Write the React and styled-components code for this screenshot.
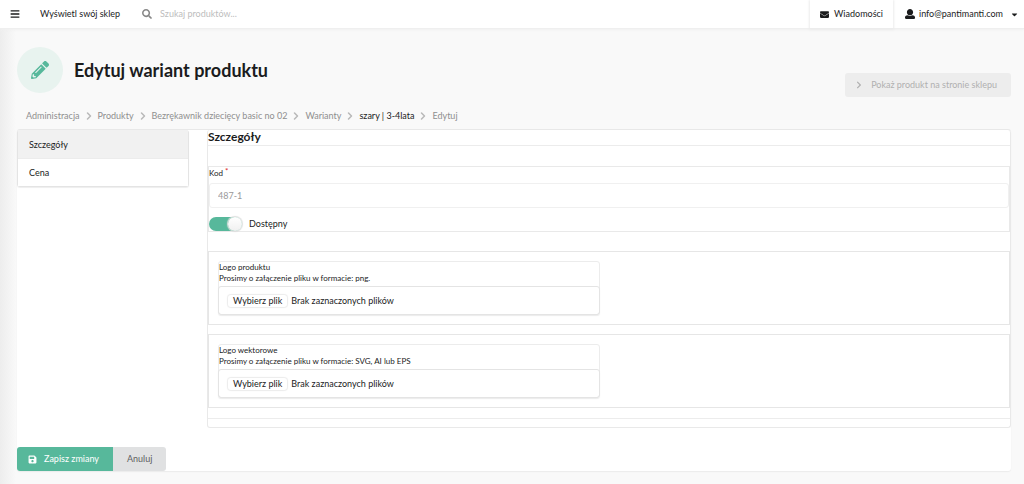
import React from 'react';
import styled, { createGlobalStyle } from 'styled-components';
import { FaBars, FaSearch, FaEnvelope, FaCaretDown, FaChevronRight, FaPencilAlt, FaSave } from 'react-icons/fa';
import { ChevronRight } from 'lucide-react';

const breadcrumbs = [
  { label: 'Administracja' },
  { label: 'Produkty' },
  { label: 'Bezrękawnik dziecięcy basic no 02' },
  { label: 'Warianty' },
  { label: 'szary | 3-4lata', dark: true },
  { label: 'Edytuj' },
];

const uploads = [
  { id: 'logo', label: 'Logo produktu', hint: 'Prosimy o załączenie pliku w formacie: png.' },
  { id: 'vector', label: 'Logo wektorowe', hint: 'Prosimy o załączenie pliku w formacie: SVG, AI lub EPS' },
];

const UserIcon = () => (
  <svg width="10" height="10" viewBox="0 0 512 512" fill="currentColor" aria-hidden="true">
    <path d="M256 0c88.366 0 160 71.634 160 160s-71.634 160-160 160S96 248.366 96 160 167.634 0 256 0zm183.283 333.821l-71.313-17.828c-74.923 53.89-165.738 41.864-223.94 0l-71.313 17.828C29.981 344.505 0 382.903 0 426.955V464c0 26.51 21.49 48 48 48h416c26.51 0 48-21.49 48-48v-37.045c0-44.052-29.981-82.45-72.717-93.134z" />
  </svg>
);

const App = () => {
  return (
    <>
      <GlobalStyle />
      <TopBar>
        <MenuButton type="button" aria-label="Menu"><FaBars size={10} /></MenuButton>
        <ShopLink href="#">Wyświetl swój sklep</ShopLink>
        <Search>
          <FaSearch size={10} />
          <SearchInput type="search" aria-label="Szukaj produktów" placeholder="Szukaj produktów..." />
        </Search>
        <Messages href="#"><FaEnvelope />Wiadomości</Messages>
        <Account type="button"><UserIcon />info@pantimanti.com<Caret /></Account>
      </TopBar>
      <Page>
        <PageHeader>
          <IconCircle><FaPencilAlt /></IconCircle>
          <Title>Edytuj wariant produktu</Title>
          <ShowButton type="button"><FaChevronRight />Pokaż produkt na stronie sklepu</ShowButton>
        </PageHeader>
        <Breadcrumb aria-label="Breadcrumb">
          {breadcrumbs.map((item, index) => (
            <React.Fragment key={item.label}>
              {index > 0 && <ChevronRight size={12} strokeWidth={3} />}
              <Crumb href="#" $dark={item.dark}>{item.label}</Crumb>
            </React.Fragment>
          ))}
        </Breadcrumb>
        <Form onSubmit={(event) => event.preventDefault()}>
          <Columns>
            <Tabs>
              <Tab href="#" $active>Szczegóły</Tab>
              <Tab href="#">Cena</Tab>
            </Tabs>
            <Details>
              <SectionTitle>Szczegóły</SectionTitle>
              <Group>
                <BasicFields>
                  <Label htmlFor="code">Kod<Required>*</Required></Label>
                  <CodeInput id="code" type="text" defaultValue="487-1" />
                  <Toggle>
                    <ToggleInput type="checkbox" role="switch" defaultChecked />
                    Dostępny
                  </Toggle>
                </BasicFields>
                {uploads.map((upload) => (
                  <UploadSection key={upload.id}>
                    <UploadField>
                      <Label htmlFor={upload.id}>{upload.label}</Label>
                      <Hint>{upload.hint}</Hint>
                      <FileBox>
                        <FileButton>Wybierz plik</FileButton>
                        Brak zaznaczonych plików
                        <FileInput id={upload.id} type="file" />
                      </FileBox>
                    </UploadField>
                  </UploadSection>
                ))}
              </Group>
            </Details>
          </Columns>
          <Actions>
            <SaveButton type="submit"><FaSave />Zapisz zmiany</SaveButton>
            <CancelLink href="#">Anuluj</CancelLink>
          </Actions>
        </Form>
      </Page>
    </>
  );
};

export default App;

const GlobalStyle = createGlobalStyle`
  * {
    box-sizing: border-box;
  }

  body {
    margin: 0;
    min-height: 100vh;
    background: linear-gradient(to right, #ededed, #f9f9f9 16px);
    color: #1b1c1d;
    font-family: Lato, 'Liberation Sans', sans-serif;
    font-size: 9px;
    line-height: 12px;
  }

  a {
    color: inherit;
    text-decoration: none;
  }

  button, input {
    font: inherit;
    color: inherit;
  }

  svg {
    flex-shrink: 0;
  }
`;

const TopBar = styled.header`
  display: flex;
  align-items: stretch;
  height: 29px;
  background: #fff;
  border-bottom: 1px solid #efefef;
  box-shadow: 0 1px 2px #f0f0f0;
`;

const BarButton = styled.button`
  display: flex;
  align-items: center;
  border: 0;
  background: none;
`;

const MenuButton = styled(BarButton)`
  padding: 0 10px;
`;

const ShopLink = styled.a`
  display: flex;
  align-items: center;
  padding: 0 10px;
`;

const Search = styled.div`
  display: flex;
  flex: 1;
  align-items: center;
  gap: 8px;
  padding: 0 12px;
  color: #888;
`;

const SearchInput = styled.input`
  flex: 1;
  min-width: 0;
  padding: 0;
  border: 0;
  outline: 0;
  background: none;

  &::placeholder {
    color: #bdbdbd;
  }
`;

const Messages = styled.a`
  display: flex;
  align-items: center;
  gap: 5px;
  padding: 0 10px;
  box-shadow: 0 1px 2px 1px #ececec;
`;

const Account = styled(BarButton)`
  gap: 4px;
  padding: 0 5px 0 12px;
`;

const Caret = styled(FaCaretDown)`
  margin-left: 3px;
`;

const Page = styled.main`
  padding: 18px 13px 13px 17px;
`;

const PageHeader = styled.div`
  display: flex;
  align-items: center;
  gap: 11px;
`;

const IconCircle = styled.div`
  display: flex;
  align-items: center;
  justify-content: center;
  width: 46px;
  height: 46px;
  border-radius: 50%;
  background: #e8f3ef;
  color: #57b89b;
  font-size: 18px;
`;

const Title = styled.h1`
  flex: 1;
  margin: 0;
  font-size: 18px;
  line-height: 24px;
`;

const ShowButton = styled.button`
  display: flex;
  align-items: center;
  align-self: flex-end;
  gap: 8px;
  height: 24px;
  margin-bottom: -4px;
  padding: 0 14px 0 10px;
  border: 0;
  border-radius: 3px;
  background: #ededed;
  color: #b0b0b0;

  svg {
    width: 8px;
    height: 8px;
  }
`;

const Breadcrumb = styled.nav`
  display: flex;
  align-items: center;
  gap: 3px;
  height: 36px;
  padding: 9px 9px 0;
  color: #b8b8b8;
`;

const Crumb = styled.a`
  color: ${({ $dark }) => ($dark ? '#1b1c1d' : '#8f8f8f')};
`;

const Form = styled.form`
  background: #fff;
  border-top: 1px solid #e8e8e8;
  border-radius: 3px;
  box-shadow: 0 1px 1px #ececec;
`;

const Columns = styled.div`
  display: flex;
  align-items: flex-start;
  gap: 18px;
`;

const Tabs = styled.nav`
  width: 172px;
  border: 1px solid #e4e4e4;
  border-radius: 3px;
  border-width: 0 1px 1px;
  box-shadow: 0 1px 1px #eee;
`;

const Tab = styled.a`
  display: block;
  padding: 7px 11px;
  border-top: 1px solid ${({ $active }) => ($active ? 'transparent' : '#ececec')};
  background: ${({ $active }) => ($active ? '#f1f1f1' : '#fff')};
  line-height: 13px;
`;

const Details = styled.div`
  flex: 1;
  min-width: 0;
  padding-bottom: 8px;
  border: 1px solid #e9e9e9;
  border-top: 0;
  border-radius: 3px;
`;

const SectionTitle = styled.h2`
  margin: 0;
  padding-bottom: 2px;
  font-size: 12px;
  line-height: 13px;
`;

const Group = styled.div`
  padding: 20px 0 10px;
  border: 1px solid #ececec;
  border-width: 1px 0;
`;

const BasicFields = styled.div`
  margin-bottom: 19px;
  border: 1px solid #e9e9e9;
`;

const Label = styled.label`
  display: block;
  font-size: 8px;
  line-height: 11px;
`;

const Required = styled.span`
  margin-left: 2px;
  color: #db2828;
  vertical-align: 2px;
  line-height: 1;
`;

const CodeInput = styled.input`
  display: block;
  width: 100%;
  height: 25px;
  margin: 4px 0 9px;
  padding: 0 8px;
  border: 1px solid #f0f0f0;
  border-radius: 3px;
  color: #999;
`;

const Toggle = styled.label`
  display: flex;
  align-items: center;
  gap: 7px;
`;

const ToggleInput = styled.input`
  appearance: none;
  width: 33px;
  height: 14px;
  margin: 0;
  border-radius: 7px;
  background: #ddd;

  &::before {
    content: '';
    display: block;
    width: 14px;
    height: 14px;
    border-radius: 50%;
    background: linear-gradient(#fff, #f0f0f0);
    box-shadow: 0 0 1px 1px #dedede;
  }

  &:checked {
    background: #57b89b;
  }

  &:checked::before {
    margin-left: auto;
  }
`;

const UploadSection = styled.div`
  padding: 9px;
  border: 1px solid #e6e6e6;

  & + & {
    margin-top: 9px;
  }
`;

const UploadField = styled.div`
  width: 382px;
  max-width: 100%;
  border: 1px solid #ececec;
  border-radius: 3px;
`;

const Hint = styled.div`
  font-size: 8px;
  line-height: 10px;
`;

const FileBox = styled.div`
  position: relative;
  display: flex;
  align-items: center;
  gap: 4px;
  height: 29px;
  margin: 3px -1px -1px;
  padding: 0 9px;
  border: 1px solid #e4e4e4;
  border-radius: 3px;
  box-shadow: 0 1px 1px #ececec;
`;

const FileButton = styled.span`
  padding: 0 5px;
  border-radius: 3px;
  box-shadow: 0 0 1px 1px #ececec;
`;

const FileInput = styled.input`
  position: absolute;
  inset: 0;
  width: 100%;
  opacity: 0;
`;

const Actions = styled.div`
  display: flex;
  margin-top: 19px;
`;

const SaveButton = styled.button`
  display: flex;
  align-items: center;
  gap: 7px;
  height: 24px;
  padding: 0 14px 0 11px;
  border: 0;
  border-radius: 3px 0 0 3px;
  background: #57b89b;
  color: #fff;
`;

const CancelLink = styled.a`
  display: flex;
  align-items: center;
  padding: 0 14px;
  border-radius: 0 3px 3px 0;
  background: #e0e1e2;
  color: #5f5f5f;
`;
